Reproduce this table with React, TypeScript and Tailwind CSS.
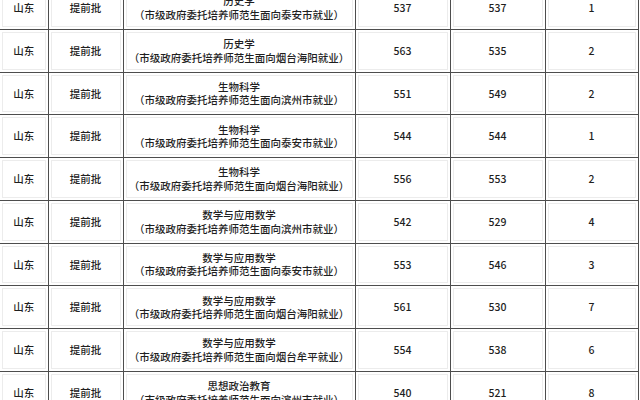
import React from 'react';

interface Row {
  major: string;
  place: string;
  high: number;
  low: number;
  count: number;
}

const rows: Row[] = [
  { major: '历史学', place: '泰安市', high: 537, low: 537, count: 1 },
  { major: '历史学', place: '烟台海阳', high: 563, low: 535, count: 2 },
  { major: '生物科学', place: '滨州市', high: 551, low: 549, count: 2 },
  { major: '生物科学', place: '泰安市', high: 544, low: 544, count: 1 },
  { major: '生物科学', place: '烟台海阳', high: 556, low: 553, count: 2 },
  { major: '数学与应用数学', place: '滨州市', high: 542, low: 529, count: 4 },
  { major: '数学与应用数学', place: '泰安市', high: 553, low: 546, count: 3 },
  { major: '数学与应用数学', place: '烟台海阳', high: 561, low: 530, count: 7 },
  { major: '数学与应用数学', place: '烟台牟平', high: 554, low: 538, count: 6 },
  { major: '思想政治教育', place: '滨州市', high: 540, low: 521, count: 8 },
];

// faint inner frame in each cell, like the scanned original
const cell =
  'border-[1.5px] border-[#4d4d4d] text-center align-middle p-0 shadow-[inset_0_0_0_2px_#fff,inset_0_0_0_3px_#ececec]';

export default function App() {
  return (
    <div className="w-[640px] h-[400px] overflow-hidden bg-white">
      <table
        className="-mt-[14px] border-collapse table-fixed w-[638px] text-[10.5px] leading-[13.5px] font-medium text-[#1f1f1f]"
        style={{ fontFamily: '"Noto Sans CJK SC", "Noto Sans", sans-serif' }}
      >
        <colgroup>
          <col className="w-[48px]" />
          <col className="w-[75px]" />
          <col className="w-[232px]" />
          <col className="w-[95px]" />
          <col className="w-[95px]" />
          <col className="w-[93px]" />
        </colgroup>
        <tbody>
          {rows.map((r, i) => (
            <tr key={i} className="h-[42.75px]">
              <td className={`${cell} border-l-0`}>山东</td>
              <td className={cell}>提前批</td>
              <td className={cell}>
                <div>{r.major}</div>
                <div className="whitespace-nowrap">（市级政府委托培养师范生面向{r.place}就业）</div>
              </td>
              <td className={cell}>{r.high}</td>
              <td className={cell}>{r.low}</td>
              <td className={cell}>{r.count}</td>
            </tr>
          ))}
        </tbody>
      </table>
    </div>
  );
}
